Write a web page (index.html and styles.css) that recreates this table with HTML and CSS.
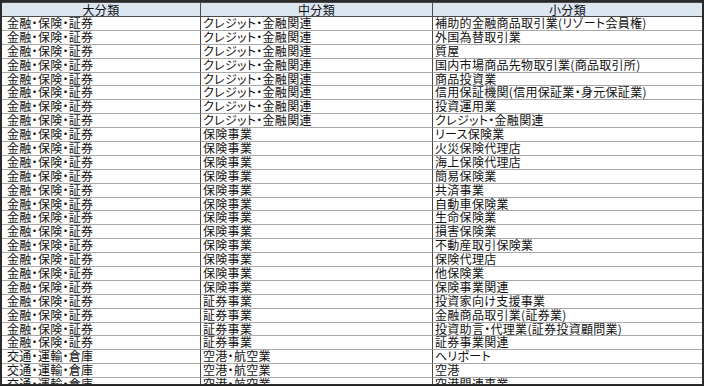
FILE: index.html
```html
<!DOCTYPE html>
<html lang="ja">
<head>
  <meta charset="UTF-8" />
  <title>業種分類一覧</title>
  <link rel="stylesheet" href="styles.css">
</head>
<body>
  <div class="sheet">
    <div class="grid" id="grid">
      <div class="cell head">大分類</div>
      <div class="cell head">中分類</div>
      <div class="cell head last">小分類</div>
    </div>
  </div>

<script>
  const rows = [
    ['金融・保険・証券', 'クレジット・金融関連', '補助的金融商品取引業(リゾート会員権)'],
    ['金融・保険・証券', 'クレジット・金融関連', '外国為替取引業'],
    ['金融・保険・証券', 'クレジット・金融関連', '質屋'],
    ['金融・保険・証券', 'クレジット・金融関連', '国内市場商品先物取引業(商品取引所)'],
    ['金融・保険・証券', 'クレジット・金融関連', '商品投資業'],
    ['金融・保険・証券', 'クレジット・金融関連', '信用保証機関(信用保証業・身元保証業)'],
    ['金融・保険・証券', 'クレジット・金融関連', '投資運用業'],
    ['金融・保険・証券', 'クレジット・金融関連', 'クレジット・金融関連'],
    ['金融・保険・証券', '保険事業', 'リース保険業'],
    ['金融・保険・証券', '保険事業', '火災保険代理店'],
    ['金融・保険・証券', '保険事業', '海上保険代理店'],
    ['金融・保険・証券', '保険事業', '簡易保険業'],
    ['金融・保険・証券', '保険事業', '共済事業'],
    ['金融・保険・証券', '保険事業', '自動車保険業'],
    ['金融・保険・証券', '保険事業', '生命保険業'],
    ['金融・保険・証券', '保険事業', '損害保険業'],
    ['金融・保険・証券', '保険事業', '不動産取引保険業'],
    ['金融・保険・証券', '保険事業', '保険代理店'],
    ['金融・保険・証券', '保険事業', '他保険業'],
    ['金融・保険・証券', '保険事業', '保険事業関連'],
    ['金融・保険・証券', '証券事業', '投資家向け支援事業'],
    ['金融・保険・証券', '証券事業', '金融商品取引業(証券業)'],
    ['金融・保険・証券', '証券事業', '投資助言・代理業(証券投資顧問業)'],
    ['金融・保険・証券', '証券事業', '証券事業関連'],
    ['交通・運輸・倉庫', '空港・航空業', 'ヘリポート'],
    ['交通・運輸・倉庫', '空港・航空業', '空港'],
    ['交通・運輸・倉庫', '空港・航空業', '空港関連事業']
  ];

  const grid = document.getElementById('grid');
  rows.forEach(r => {
    r.forEach((text, i) => {
      const cell = document.createElement('div');
      cell.className = 'cell col' + (i + 1) + (i === 2 ? ' last' : '');
      cell.textContent = text;
      grid.appendChild(cell);
    });
  });
</script>
</body>
</html>
```

FILE: styles.css
```css
:root {
  --color-frame: #2a2a2a;
  --color-divider: #4a4a4a;
  --color-row-line: #a8a8a8;
  --color-head: #dce6f1;
  --color-text: #111;
}

body {
  margin: 0;
  background: white;
  font-family: "Noto Sans CJK JP", "Liberation Sans", sans-serif;
  color: var(--color-text);
}

.sheet {
  width: 700px;
  height: 382px;
  border: 2px solid var(--color-frame);
  overflow: hidden;
  background: white;
}

.grid {
  display: grid;
  grid-template-columns: 199px 232px 269px;
  grid-template-rows: 15px;
  grid-auto-rows: 13.9px;
}

.cell {
  box-sizing: border-box;
  border-right: 1px solid var(--color-divider);
  border-bottom: 1px solid var(--color-row-line);
  font-size: 12px;
  line-height: 12.9px;
  padding-left: 2px;
  white-space: nowrap;
  letter-spacing: 0.3px;
  font-feature-settings: "palt";
}

.cell.last {
  border-right: none;
}

.head {
  background: var(--color-head);
  text-align: center;
  padding-left: 0;
  line-height: 13px;
  border-top: 1px solid var(--color-divider);
  border-bottom-color: var(--color-divider);
}

.col1 {
  padding-left: 5px;
}
```
